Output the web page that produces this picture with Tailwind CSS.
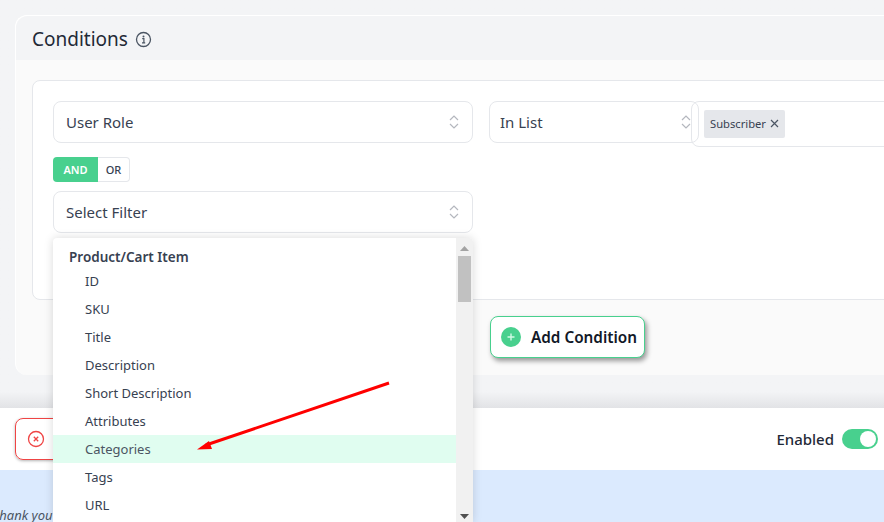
<!doctype html>
<html><head><meta charset="utf-8"><script src="https://cdn.jsdelivr.net/npm/@tailwindcss/browser@4"></script></head>
<body class="m-0 p-0">
<div class="relative w-[884px] h-[522px] overflow-hidden bg-[#f3f4f6] font-['Noto_Sans',sans-serif] text-[#374151]">
  <div class="h-[408px] pt-[15px] pl-[15px] bg-gradient-to-b from-[#f3f4f6] from-[96%] to-[#e2e3e6]">
    <div class="w-[900px] h-[360px] rounded-tl-xl rounded-bl-xl border-t border-l border-white bg-[#fafafa] flex flex-col">
      <div class="h-[44px] bg-[#f3f4f6] flex items-center pl-[16px] pt-[2px] gap-[7px] rounded-tl-xl">
        <span class="text-[19px] leading-[28px] text-[#1f2937]">Conditions</span>
        <svg width="17" height="17" viewBox="0 0 17 17" fill="none"><circle cx="8.5" cy="8.5" r="7" stroke="#4b5563" stroke-width="1.3"/><circle cx="8.5" cy="5.4" r="1" fill="#4b5563"/><path d="M7.2 7.7h1.7v4M7 11.9h3.2" stroke="#4b5563" stroke-width="1.2"/></svg>
      </div>
      <div class="pt-[20px] pl-[16px]">
        <div class="w-[880px] h-[220px] bg-white border border-[#e5e7eb] rounded-lg pt-[20px] pl-[20px]">
          <div class="flex items-start gap-[16px]">
            <div class="w-[420px] h-[42px] border border-[#e5e7eb] rounded-lg flex items-center justify-between pl-[12px] pr-[12px] text-[15px]">User Role
              <svg width="12" height="18" viewBox="0 0 12 18" fill="none" stroke="#b4b7be" stroke-width="1.2"><path d="M2 7l4-4 4 4M2 11l4 4 4-4"/></svg></div>
            <div class="relative">
              <div class="w-[210px] h-[42px] border border-[#e5e7eb] rounded-lg flex items-center justify-between pl-[10px] pr-[6px] text-[15px]">In List
                <svg width="12" height="18" viewBox="0 0 12 18" fill="none" stroke="#b4b7be" stroke-width="1.2"><path d="M2 7l4-4 4 4M2 11l4 4 4-4"/></svg></div>
              <div class="absolute left-[202px] top-0 w-[300px] h-[46px] border border-[#e5e7eb] rounded-lg pl-[12px] pt-[8px]">
                <span class="inline-flex items-center gap-[4px] h-[28px] px-[6px] bg-[#e5e7eb] rounded-[2px] text-[11.2px]">Subscriber
                  <svg width="9" height="9" viewBox="0 0 9 9" stroke="#4b5563" stroke-width="1.2" class="-mt-[2px]"><path d="M1 1l7 7M8 1l-7 7"/></svg></span>
              </div>
            </div>
          </div>
          <div class="flex mt-[14px] w-[77px] h-[25px] text-[11px] font-medium leading-[25px]">
            <span class="w-[45px] text-center bg-[#48d08e] text-white font-semibold rounded-l-[4px]">AND</span>
            <span class="w-[32px] text-center bg-white border border-l-0 border-[#e5e7eb] rounded-r-[4px] leading-[23px]">OR</span>
          </div>
          <div class="mt-[9px] w-[420px] h-[42px] border border-[#e5e7eb] rounded-lg flex items-center justify-between pl-[12px] pr-[12px] text-[15px]">Select Filter
            <svg width="12" height="18" viewBox="0 0 12 18" fill="none" stroke="#b4b7be" stroke-width="1.2"><path d="M2 7l4-4 4 4M2 11l4 4 4-4"/></svg></div>
        </div>
        <div class="pl-[458px] pt-[16px]">
          <button class="w-[155px] h-[42px] flex items-center gap-[10px] pl-[10px] bg-white border border-[#48d08e] rounded-lg shadow-[2px_3px_5px_rgba(0,0,0,0.4)] text-[15.3px] font-semibold text-[#111827]">
            <svg width="20" height="20" viewBox="0 0 20 20"><circle cx="10" cy="10" r="10" fill="#48d08e"/><path d="M10 6.5v7M6.5 10h7" stroke="#d1fae5" stroke-width="1.4"/></svg>Add Condition</button>
        </div>
      </div>
    </div>
  </div>
  <div class="h-[62px] bg-white flex items-center justify-between pl-[15px] pr-[6px]">
    <div class="w-[60px] h-[42px] border border-[#ef4444] rounded-lg shadow-[0_1px_3px_rgba(0,0,0,0.3)] flex items-center pl-[11px]">
      <svg width="18" height="18" viewBox="0 0 18 18" fill="none" stroke="#ef4444" stroke-width="1.3"><circle cx="9" cy="9" r="7.5"/><path d="M6.8 6.8l4.4 4.4M11.2 6.8l-4.4 4.4"/></svg>
    </div>
    <div class="flex items-center gap-[8px] text-[15px] font-medium text-[#1f2937]">Enabled
      <span class="w-[36px] h-[20px] rounded-full bg-[#48d08e] flex items-center justify-end pr-[2px]"><span class="w-[16px] h-[16px] bg-white rounded-full"></span></span>
    </div>
  </div>
  <div class="h-[52px] bg-[#dbeafe] text-[13px] italic pt-[38px] leading-[14px] text-[#4b5563] -indent-[5px] whitespace-nowrap">thank you</div>

  <div class="absolute left-[53px] top-[238px] w-[420px] h-[284px] bg-white shadow-[0_0_10px_rgba(0,0,0,0.15)] rounded-t-[4px] flex overflow-hidden">
    <div class="flex-1 pt-[7px] text-[13px] text-[#374151]">
      <div class="h-[22px] pl-[16px] font-semibold text-[13.5px] leading-[24px]">Product/Cart Item</div>
      <div class="h-[28px] leading-[28px] pl-[32px]">ID</div>
      <div class="h-[28px] leading-[28px] pl-[32px]">SKU</div>
      <div class="h-[28px] leading-[28px] pl-[32px]">Title</div>
      <div class="h-[28px] leading-[28px] pl-[32px]">Description</div>
      <div class="h-[28px] leading-[28px] pl-[32px]">Short Description</div>
      <div class="h-[28px] leading-[28px] pl-[32px]">Attributes</div>
      <div class="h-[28px] leading-[28px] pl-[32px] bg-[#e0fdf0] text-[#4b5563]">Categories</div>
      <div class="h-[28px] leading-[28px] pl-[32px]">Tags</div>
      <div class="h-[28px] leading-[28px] pl-[32px]">URL</div>
    </div>
    <div class="w-[17px] bg-[#f1f1f1] relative">
      <svg class="absolute left-[4px] top-[8px]" width="9" height="5" viewBox="0 0 9 5"><path d="M0 5l4.5-5L9 5z" fill="#a3a3a3"/></svg>
      <div class="absolute left-[2px] top-[18px] w-[13px] h-[46px] bg-[#c1c1c1]"></div>
      <svg class="absolute left-[4px] top-[276px]" width="9" height="5" viewBox="0 0 9 5"><path d="M0 0l4.5 5L9 0z" fill="#505050"/></svg>
    </div>
  </div>
  <svg class="absolute left-0 top-0 pointer-events-none" width="884" height="522" viewBox="0 0 884 522" fill="none"><path d="M389 383L206 445" stroke="#ff0000" stroke-width="3"/><path d="M197 449.5L209 441L212 449Z" fill="#ff0000"/></svg>
</div>
</body></html>
